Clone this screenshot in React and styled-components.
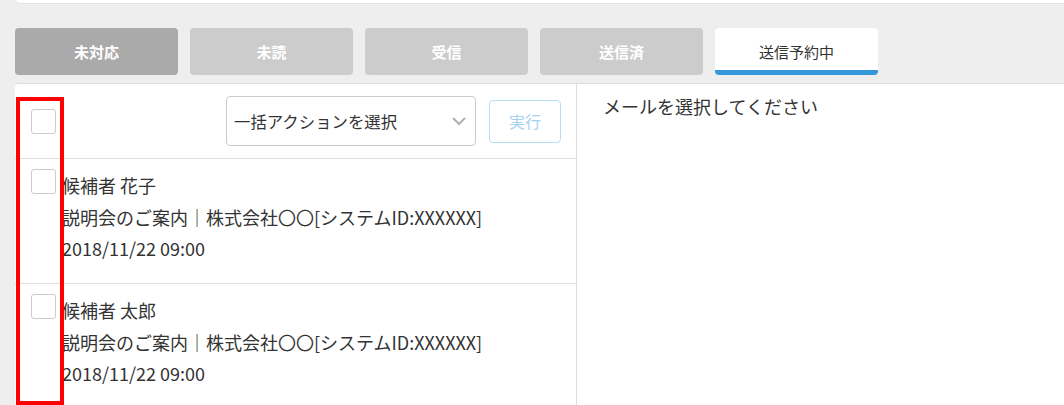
import React from 'react'
import styled, { createGlobalStyle } from 'styled-components'

const GlobalStyle = createGlobalStyle`
  html, body {
    margin: 0;
    padding: 0;
    background: #eeeeee;
    font-family: "Noto Sans CJK JP", "Noto Sans", sans-serif;
    color: #333;
    overflow: hidden;
  }
`

const Page = styled.div`
  padding-left: 15px;
  height: 405px;
  overflow: hidden;
`

const TopStrip = styled.div`
  height: 3px;
  margin-left: 1px;
  background: #fff;
  border-bottom: 1px solid #e2e2e2;
  border-bottom-left-radius: 4px;
`

const Tabs = styled.div`
  display: flex;
  gap: 12px;
  margin-top: 24px;
`

const Tab = styled.div`
  width: 163px;
  height: 47px;
  box-sizing: border-box;
  border-radius: 4px;
  display: flex;
  align-items: center;
  justify-content: center;
  font-size: 15px;
  font-weight: ${p => (p.$active ? 400 : 700)};
  color: ${p => (p.$active ? '#333' : '#fff')};
  background: ${p => (p.$active ? '#fff' : p.$dark ? '#aaaaaa' : '#cccccc')};
  border-bottom: ${p => (p.$active ? '5px solid #3498db' : 'none')};
  padding-top: ${p => (p.$active ? '5px' : '0')};
`

const Panel = styled.div`
  position: relative;
  margin-top: 8px;
  background: #fff;
  border-top: 1px solid #dddddd;
  border-top-left-radius: 4px;
  display: grid;
  grid-template-columns: 562px 1fr;
  height: 321px;
  overflow: hidden;
`

const ListCol = styled.div`
  border-right: 1px solid #dddddd;
`

const ListHeader = styled.div`
  height: 74px;
  display: flex;
  align-items: center;
  padding: 0 15px 0 16px;
  border-bottom: 1px solid #dddddd;
`

const Check = styled.span`
  display: block;
  width: 25px;
  height: 25px;
  box-sizing: border-box;
  border: 1px solid #cccccc;
  border-radius: 3px;
  background: #fff;
  flex-shrink: 0;
`

const Spacer = styled.div`
  flex: 1;
`

const Select = styled.div`
  width: 250px;
  height: 50px;
  box-sizing: border-box;
  border: 1px solid #cccccc;
  border-radius: 4px;
  display: flex;
  align-items: center;
  justify-content: space-between;
  padding: 0 8px 0 7px;
  font-size: 16.4px;
  color: #333;
`

const RunButton = styled.div`
  margin-left: 13px;
  width: 72px;
  height: 43px;
  box-sizing: border-box;
  border: 1px solid #b5dcf5;
  border-radius: 4px;
  display: flex;
  align-items: center;
  justify-content: center;
  font-size: 16px;
  color: #a4d3f2;
`

const Row = styled.div`
  display: flex;
  gap: 6px;
  padding: 10px 16px 0;
  height: 125px;
  box-sizing: border-box;
  border-bottom: 1px solid #dddddd;
`

const RowText = styled.div`
  padding-top: 1px;
  font-size: 18px;
  line-height: 31.5px;
  color: #333;
  white-space: nowrap;
`

const Line = styled.div``

const Detail = styled.div`
  padding: 10px 26px;
  font-size: 18px;
  line-height: 24px;
  color: #333;
`

const Highlight = styled.div`
  position: absolute;
  left: 1px;
  top: 13px;
  width: 48px;
  height: 308px;
  box-sizing: border-box;
  border: 4px solid #ff0000;
  pointer-events: none;
`

const Chevron = () => (
  <svg width="16" height="10" viewBox="0 0 16 10">
    <path d="M2 2 L8 8 L14 2" fill="none" stroke="#b0b0b0" strokeWidth="2" />
  </svg>
)

const tabs = [
  { label: '未対応', dark: true },
  { label: '未読' },
  { label: '受信' },
  { label: '送信済' },
  { label: '送信予約中', active: true },
]

const mails = [
  { name: '候補者 花子', subject: '説明会のご案内｜株式会社〇〇[システムID:XXXXXX]', date: '2018/11/22 09:00' },
  { name: '候補者 太郎', subject: '説明会のご案内｜株式会社〇〇[システムID:XXXXXX]', date: '2018/11/22 09:00' },
]

export default function App() {
  return (
    <Page>
      <GlobalStyle />
      <TopStrip />
      <Tabs>
        {tabs.map(t => (
          <Tab key={t.label} $active={t.active} $dark={t.dark}>
            {t.label}
          </Tab>
        ))}
      </Tabs>
      <Panel>
        <ListCol>
          <ListHeader>
            <Check />
            <Spacer />
            <Select>
              <span>一括アクションを選択</span>
              <Chevron />
            </Select>
            <RunButton>実行</RunButton>
          </ListHeader>
          {mails.map((m, i) => (
            <Row key={i}>
              <Check />
              <RowText>
                <Line>{m.name}</Line>
                <Line>{m.subject}</Line>
                <Line>{m.date}</Line>
              </RowText>
            </Row>
          ))}
        </ListCol>
        <Detail>メールを選択してください</Detail>
        <Highlight />
      </Panel>
    </Page>
  )
}
